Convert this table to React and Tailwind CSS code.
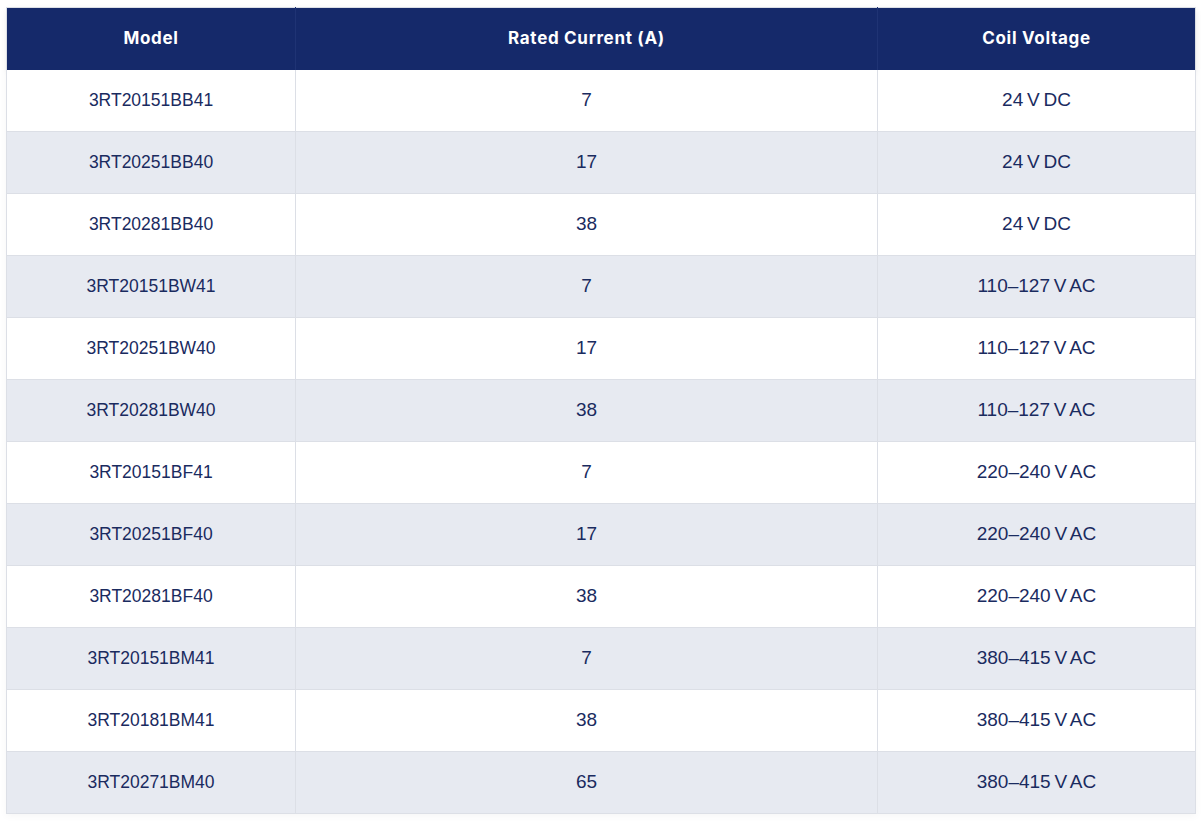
import React from 'react';

const rows = [
  ['3RT20151BB41', '7', '24 V DC'],
  ['3RT20251BB40', '17', '24 V DC'],
  ['3RT20281BB40', '38', '24 V DC'],
  ['3RT20151BW41', '7', '110–127 V AC'],
  ['3RT20251BW40', '17', '110–127 V AC'],
  ['3RT20281BW40', '38', '110–127 V AC'],
  ['3RT20151BF41', '7', '220–240 V AC'],
  ['3RT20251BF40', '17', '220–240 V AC'],
  ['3RT20281BF40', '38', '220–240 V AC'],
  ['3RT20151BM41', '7', '380–415 V AC'],
  ['3RT20181BM41', '38', '380–415 V AC'],
  ['3RT20271BM40', '65', '380–415 V AC'],
];

export default function App() {
  return (
    <div className="min-h-screen bg-white pl-[6px] pt-[7px]">
      <table className="w-[1189px] table-fixed border-collapse border border-[#dcdfe6] shadow-[0_2px_8px_rgba(0,0,0,0.04)]">
        <colgroup>
          <col className="w-[289px]" />
          <col className="w-[582px]" />
          <col className="w-[318px]" />
        </colgroup>
        <thead>
          <tr className="h-[62px] bg-[#15296a] text-white shadow-[0_3px_6px_rgba(0,0,0,0.06)]">
            {['Model', 'Rated Current (A)', 'Coil Voltage'].map((h, i) => (
              <th
                key={h}
                className={`text-center text-[17px] font-bold font-['Inter',sans-serif] tracking-[0.7px] ${i > 0 ? 'border-l border-[#1f3374]' : ''}`}
              >
                {h}
              </th>
            ))}
          </tr>
        </thead>
        <tbody>
          {rows.map((r, idx) => (
            <tr
              key={r[0]}
              className={`h-[62px] border-b border-[#dcdfe6] ${idx % 2 === 1 ? 'bg-[#e7eaf1]' : 'bg-white'}`}
            >
              <td className="text-center text-[17.5px] text-[#1a2b5f] font-['Liberation_Sans',Arial,sans-serif]">{r[0]}</td>
              <td className="border-l border-[#dcdfe6] text-center text-[19px] text-[#1a2b5f] font-['Liberation_Sans',Arial,sans-serif]">{r[1]}</td>
              <td className="border-l border-[#dcdfe6] text-center text-[19px] [word-spacing:-1.5px] text-[#1a2b5f] font-['Liberation_Sans',Arial,sans-serif]">{r[2]}</td>
            </tr>
          ))}
        </tbody>
      </table>
    </div>
  );
}
